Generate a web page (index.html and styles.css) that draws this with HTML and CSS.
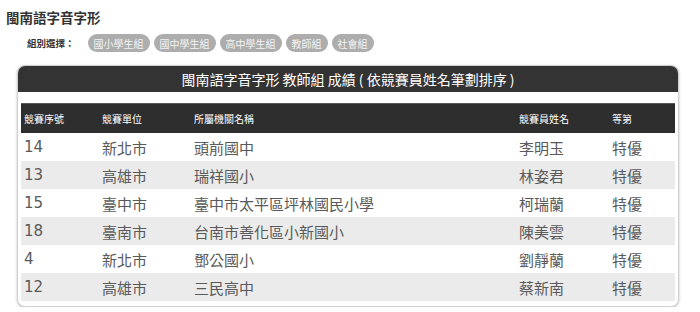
FILE: index.html
```html
<!DOCTYPE html>
<html lang="zh-Hant">
<head>
<meta charset="utf-8">
<link rel="stylesheet" href="styles.css">
</head>
<body>
<h1 class="title">閩南語字音字形</h1>
<div class="filter">
  <span class="filter-label">組別選擇：</span>
  <span class="pill">國小學生組</span>
  <span class="pill">國中學生組</span>
  <span class="pill">高中學生組</span>
  <span class="pill">教師組</span>
  <span class="pill">社會組</span>
</div>
<div class="box">
  <div class="box-head">閩南語字音字形 教師組 成績 ( 依競賽員姓名筆劃排序 )</div>
  <div class="box-body">
    <table class="results">
      <thead>
        <tr><th class="c1">競賽序號</th><th class="c2">競賽單位</th><th class="c3">所屬機關名稱</th><th class="c4">競賽員姓名</th><th class="c5">等第</th></tr>
      </thead>
      <tbody>
        <tr><td>14</td><td>新北市</td><td>頭前國中</td><td>李明玉</td><td>特優</td></tr>
        <tr><td>13</td><td>高雄市</td><td>瑞祥國小</td><td>林姿君</td><td>特優</td></tr>
        <tr><td>15</td><td>臺中市</td><td>臺中市太平區坪林國民小學</td><td>柯瑞蘭</td><td>特優</td></tr>
        <tr><td>18</td><td>臺南市</td><td>台南市善化區小新國小</td><td>陳美雲</td><td>特優</td></tr>
        <tr><td>4</td><td>新北市</td><td>鄧公國小</td><td>劉靜蘭</td><td>特優</td></tr>
        <tr><td>12</td><td>高雄市</td><td>三民高中</td><td>蔡新南</td><td>特優</td></tr>
      </tbody>
    </table>
  </div>
</div>
</body>
</html>
```
FILE: styles.css
```css
html, body {
  margin: 0;
  padding: 0;
  background: #fff;
}
body {
  font-family: "Noto Sans CJK TC", "Noto Sans", sans-serif;
  color: #333;
}
.title {
  margin: 7px 0 0 6px;
  font-size: 13.5px;
  line-height: 20px;
  font-weight: bold;
  color: #333;
}
.filter {
  display: flex;
  align-items: center;
  gap: 4px;
  margin: 7px 0 0 27px;
  height: 18px;
}
.filter-label {
  font-size: 9.5px;
  font-weight: bold;
  color: #333;
  margin-right: 9px;
}
.pill {
  display: inline-flex;
  align-items: center;
  height: 18px;
  padding: 0 6px;
  border-radius: 9px;
  background: #adadad;
  color: #f4f4f4;
  font-size: 10px;
}
.box {
  margin: 13px 0 0 17px;
  width: 660px;
  border: 1px solid #d0d0d0;
  border-radius: 8px;
  box-shadow: 0 1px 3px rgba(0,0,0,0.25);
  overflow: hidden;
  background: #fff;
}
.box-head {
  height: 26px;
  line-height: 26px;
  background: #333;
  color: #fff;
  text-align: center;
  font-size: 14px;
}
.box-body {
  padding: 11px 3px 5px;
}
.results {
  width: 654px;
  border-collapse: collapse;
  table-layout: fixed;
}
.results th {
  height: 29px;
  padding: 0 0 0 3px;
  background: #2e2e2e;
  border-top: 1px solid #5a5a5a;
  color: #fff;
  font-size: 10px;
  font-weight: normal;
  text-align: left;
}
.results .c1 { width: 75px; }
.results .c2 { width: 89px; }
.results .c3 { width: 322px; }
.results .c4 { width: 90px; }
.results td {
  height: 28px;
  padding: 0 0 0 3px;
  font-family: "DejaVu Sans", "Noto Sans CJK TC", sans-serif;
  font-size: 15px;
  color: #5a5a5a;
  white-space: nowrap;
}
.results tbody tr:nth-child(even) td {
  background: #ebebeb;
}
```
